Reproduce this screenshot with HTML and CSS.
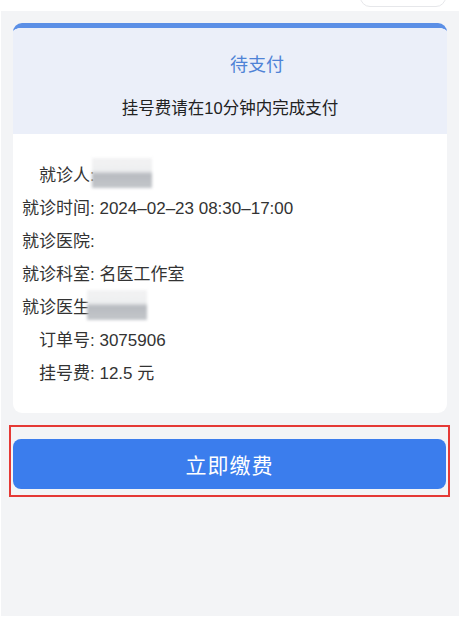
FILE: index.html
```html
<!DOCTYPE html>
<html lang="zh-CN">
<head>
    <meta charset="UTF-8">
    <meta name="viewport" content="width=device-width, initial-scale=1.0">
    <title>待支付</title>
    <link rel="stylesheet" href="styles.css">
</head>
<body>
    <div class="top-bar">
        <div class="pill"></div>
    </div>
    <div class="page">
        <div class="card">
            <div class="card-head">
                <div class="status">待支付</div>
                <div class="tip">挂号费请在10分钟内完成支付</div>
            </div>
            <div class="card-body">
                <div class="row indent">就诊人: <span class="mask"></span></div>
                <div class="row">就诊时间: 2024–02–23 08:30–17:00</div>
                <div class="row">就诊医院:</div>
                <div class="row">就诊科室: 名医工作室</div>
                <div class="row">就诊医生<span class="mask"></span></div>
                <div class="row indent">订单号: 3075906</div>
                <div class="row indent">挂号费: 12.5 元</div>
            </div>
        </div>
        <div class="pay-box">
            <button type="button" class="pay-btn">立即缴费</button>
        </div>
    </div>
</body>
</html>
```

FILE: styles.css
```css
html, body {
    margin: 0;
    padding: 0;
}
body {
    font-family: "Liberation Sans", "Noto Sans CJK SC", sans-serif;
    background: #fff;
    width: 461px;
    height: 618px;
    overflow: hidden;
}
.top-bar {
    height: 11px;
    background: #fff;
    display: flex;
    justify-content: flex-end;
    padding-right: 15px;
    overflow: hidden;
}
.pill {
    width: 84px;
    height: 20px;
    margin-top: -15px;
    border: 1px solid #e6e7ea;
    border-radius: 10px;
}
.page {
    background: #f3f4f6;
    margin: 0 2px 2px 1px;
    height: 605px;
    padding: 12px 12px 0 12px;
    box-sizing: border-box;
}
.card {
    background: #fff;
    border-radius: 9px;
    border-top: 5px solid #5b8fe6;
    overflow: hidden;
}
.card-head {
    background: #ebeff9;
    height: 106px;
    text-align: center;
}
.status {
    color: #4f83d6;
    font-size: 18px;
    padding-top: 25px;
    line-height: 24px;
    margin-left: 54px;
}
.tip {
    color: #222;
    font-size: 16.5px;
    margin-top: 20px;
    line-height: 22px;
}
.card-body {
    padding: 31px 0 17px 9px;
}
.row {
    color: #333;
    font-size: 17px;
    line-height: 22px;
    height: 33px;
    display: flex;
    align-items: flex-start;
}
.row.indent {
    padding-left: 17px;
}
.mask {
    display: inline-block;
    width: 60px;
    height: 30px;
    margin-top: -7px;
    margin-left: -3px;
    background: linear-gradient(#f2f2f3 0%, #eeeff0 42%, #b8bbc0 55%, #c3c6ca 100%);
    filter: blur(1.5px);
}
.pay-box {
    margin: 12px -3px 0 -4px;
    border: 2px solid #e53935;
    padding: 12px 2px 6px 2px;
}
.pay-btn {
    display: block;
    width: 100%;
    height: 50px;
    border: none;
    border-radius: 8px;
    background: #3b7ded;
    color: #fff;
    font-family: "Noto Sans CJK SC", sans-serif;
    font-size: 21px;
    letter-spacing: 1px;
}
```
